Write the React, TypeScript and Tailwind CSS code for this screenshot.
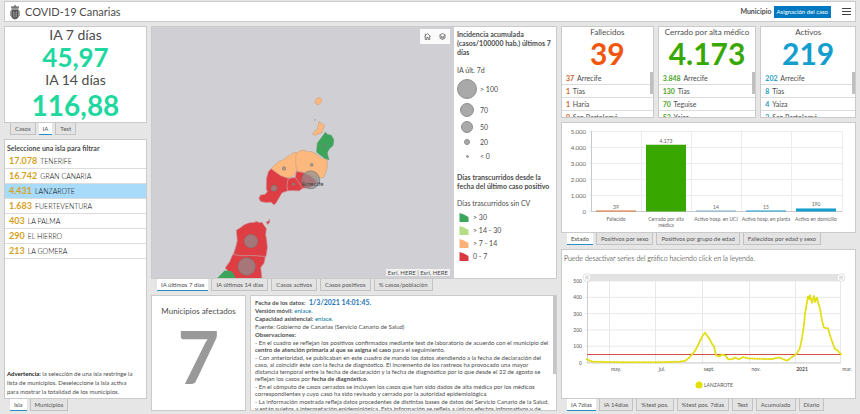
import { useState, type ReactNode } from "react"
import clsx from "clsx"

const islands = [
  { name: "TENERIFE", cases: "17.078" },
  { name: "GRAN CANARIA", cases: "16.742" },
  { name: "LANZAROTE", cases: "4.431" },
  { name: "FUERTEVENTURA", cases: "1.683" },
  { name: "LA PALMA", cases: "403" },
  { name: "EL HIERRO", cases: "290" },
  { name: "LA GOMERA", cases: "213" },
]

const indicators = [
  {
    title: "Fallecidos",
    total: "39",
    color: "text-[#f0560f]",
    rowColor: "text-[#d0632a]",
    rows: [["37", "Arrecife"], ["1", "Tías"], ["1", "Haría"], ["0", "San Bartolomé"]],
  },
  {
    title: "Cerrado por alta médico",
    total: "4.173",
    color: "text-[#38a800]",
    rowColor: "text-[#4fa52a]",
    rows: [["3.848", "Arrecife"], ["130", "Tías"], ["70", "Teguise"], ["53", "Yaiza"]],
  },
  {
    title: "Activos",
    total: "219",
    color: "text-[#149ece]",
    rowColor: "text-[#2b9cc4]",
    rows: [["202", "Arrecife"], ["8", "Tías"], ["4", "Yaiza"], ["2", "San Bartolomé"]],
  },
]

const bars = [
  { label: ["Fallecido"], value: 39, text: "39", fill: "#e0702f" },
  { label: ["Cerrado por alta", "médica"], value: 4173, text: "4.173", fill: "#38a800" },
  { label: ["Activo hosp. en UCI"], value: 14, text: "14", fill: "#7fb2c8" },
  { label: ["Activo hosp. en planta"], value: 15, text: "15", fill: "#149ece" },
  { label: ["Activo en domicilio"], value: 190, text: "190", fill: "#149ece" },
]

// [x on the time axis, accumulated incidence]
const series = [
  [25, 20], [28, 10], [31, 5], [48, 3], [70, 1], [93, 1], [110, 4], [118, 5], [123, 10], [127, 28],
  [130, 49], [133, 72], [136, 105], [139, 145], [141, 168], [143, 182], [145, 165], [147, 150],
  [150, 115], [152, 100], [154, 46], [157, 35], [160, 50], [164, 40], [166, 20], [170, 20],
  [173, 30], [177, 20], [181, 33], [186, 25], [196, 23], [210, 21], [217, 31], [225, 11],
  [230, 33], [235, 55], [238, 90], [240, 150], [242, 230], [243, 300], [245, 373], [246, 405],
  [247, 385], [248, 414], [250, 366], [252, 410], [253, 370], [255, 400], [256, 370], [258, 332],
  [260, 260], [262, 213], [266, 209], [269, 148], [273, 82], [276, 72], [279, 50],
]

const months = [
  { x: 48, label: "may." },
  { x: 94, label: "jul." },
  { x: 141, label: "sept." },
  { x: 188, label: "nov." },
  { x: 234, label: "2021" },
  { x: 279, label: "mar." },
]

function Panel({ className, children }: { className?: string; children: ReactNode }) {
  return <section className={clsx("min-h-0 min-w-0 border border-[#cacaca] bg-white", className)}>{children}</section>
}

function Tabs({ items, initial = 0 }: { items: string[]; initial?: number }) {
  const [active, setActive] = useState(initial)

  return (
    <div role="tablist" className="flex h-3 shrink-0 gap-[3px] pl-[6px]">
      {items.map((item, i) => (
        <button
          key={item}
          role="tab"
          aria-selected={i === active}
          onClick={() => setActive(i)}
          className={clsx(
            "border-b px-1 text-[6px] leading-[11px] whitespace-nowrap",
            i === active
              ? "border-[#2a8dc2] bg-white"
              : "border-r border-l border-[#c2c2c2] bg-[#e3e3e3] text-[#555]"
          )}
        >
          {item}
        </button>
      ))}
    </div>
  )
}

function Crest() {
  return (
    <svg viewBox="0 0 10 16" className="h-4 w-[10px]" aria-hidden="true">
      <path d="M1 4 1.6 1.8 3 2.8 5 .8l2 2 1.4-1L9 4z" fill="#777" />
      <path d="M1.5 5h7" stroke="#333" strokeWidth="1" />
      <path d="M1.3 6h7.4v6.5Q8 15 5 15.4 2 15 1.3 12.500z" fill="#555" />
      <path d="M3.500 7v6M5 8v6M6.500 7v6" stroke="#aaa" strokeWidth=".6" />
      <path d="M.5 7v5M9.500 7v5" stroke="#888" strokeWidth=".8" />
    </svg>
  )
}

function Header() {
  return (
    <header className="flex h-[21px] shrink-0 items-center border border-[#cacaca] bg-white pr-1 pl-[5px]">
      <Crest />
      <h1 className="ml-[5px] text-[11px] leading-4">COVID-19 Canarias</h1>
      <span id="municipio" className="mr-[2px] ml-auto text-[7px] font-bold">
        Municipio
      </span>
      <button aria-describedby="municipio" className="h-3 bg-[#0079c1] px-[3px] text-[6px] leading-3 text-white">
        Asignación del caso
      </button>
      <button aria-label="Menú" className="ml-[11px]">
        <svg viewBox="0 0 9 9" className="size-[9px]" stroke="#444" strokeWidth="1">
          <path d="M0 1.500h9M0 4.500h9M0 7.500h9" />
        </svg>
      </button>
    </header>
  )
}

function MapView() {
  return (
    <div className="relative min-w-0 flex-1 bg-[#cfcfd4]">
      <svg
        viewBox="-144 -189 906 756"
        preserveAspectRatio="xMidYMid slice"
        className="absolute inset-0 h-full w-full"
        role="img"
        aria-label="Mapa de municipios"
      >
        <g fill="#fdb97d" stroke="#c9a184" strokeWidth="2">
          <path d="m345 37 5-10 10-3 6 6-2 8-7 7-9-1z" />
          <path d="m357 96 17 12-9 22-14 4-5 4-8-4 6-9 8-6z" />
          <path d="m213 238 12-12 12-11 16-5 8-9 9-3 6-6 12-4 4 12-2 46-14 17-22 3-20-7z" />
          <path d="m288 192 12-8 13-2 9 5 12-1 14 7 16 13 17 4 1 24-4 12-7 18-14 2-27-8-22-10-18-3-3-23z" />
        </g>
        <path d="m343 89 4-1-1 6-3 1z" fill="#aaa" />
        <path d="m438 102 5 1-2 2z" fill="#bbb" />
        <path
          d="m371 136 5-8 5 6 13 4 7 13-2 17-11 10-6 10 1 10 4 13-13-5-18-13-6-5 2-27z"
          fill="#3ba55b"
          stroke="#5c9a68"
          strokeWidth="2"
        />
        <g fill="#de3d43" stroke="#c98b90" strokeWidth="2">
          <path d="m213 238 28 20 24 9-4 21 2 16-17 6-12 20-6 11-7 5-7-8-17 1-15-3-5-9 4-10 15-3 6-7-3-10 1-32 6-20z" />
          <path d="m265 267 21-3 9 12 13 20-10 8-20-1-15 1-2-17z" />
          <path d="m289 246 19 3 22 10 20 15-7 12-14 8-21 2-13-20-9-12z" />
          <path d="m199 397 6-2 4-6-1 11-5 5z" />
          <path d="m109 422 12-7 12-9 15-6 14-1 8-3 8 4 8-2 7 11 6 8-2 18 3 18 2 21-4 27-45-3-28 1-25-4 7-21 5-20z" />
          <path d="m98 495 25 4 28-1 45 3-4 20-10 13 4 34h-84l-26-33 13-18z" />
        </g>
        <path d="m50 568 15-16 9-9 21 2 10 15v8z" fill="#3ba55b" />
        <g fill="#8f8f8f" fillOpacity=".7" stroke="#777" strokeWidth="2">
          <circle cx="153" cy="455" r="20" />
          <circle cx="140" cy="531" r="26" />
          <circle cx="222" cy="296" r="9" />
          <circle cx="252" cy="237" r="5" />
          <circle cx="335" cy="226" r="4" />
          <circle cx="281" cy="284" r="4" />
          <circle cx="374" cy="168" r="3" />
          <circle cx="332" cy="271" r="27" />
        </g>
        <text x="338" y="289" textAnchor="middle" fontSize="19" fill="#444">
          Arrecife
        </text>
      </svg>
      <div className="absolute top-[2px] right-1 flex h-[15px] items-center bg-white/90">
        <button aria-label="Inicio" className="px-[4px]">
          <svg viewBox="0 0 14 14" className="size-[7px]" fill="none" stroke="#555" strokeWidth="1.500">
            <path d="M1 7 7 1l6 6M2.500 6v7h3V9h3v4h3V6M2.500 5V1.500" />
          </svg>
        </button>
        <button aria-label="Capas" className="px-[4px]">
          <svg viewBox="0 0 14 14" className="size-[7px]" fill="none" stroke="#555" strokeWidth="1.500">
            <path d="M7 1 13 4.500 7 8 1 4.500zM1 7l6 3.500L13 7M1 9.500 7 13l6-3.500" />
          </svg>
        </button>
      </div>
      <p className="absolute right-1 bottom-[2px] bg-white/70 px-[2px] text-[6px] leading-[7px]">
        Esri, HERE | Esri, HERE
      </p>
    </div>
  )
}

const sizes = [
  { dot: "size-5", label: "> 100" },
  { dot: "size-[14px]", label: "70" },
  { dot: "size-3", label: "50" },
  { dot: "size-[6px]", label: "20" },
  { dot: "size-[3px]", label: "< 0" },
]

const ranges = [
  { color: "#3ba55b", label: "> 30" },
  { color: "#b5dd84", label: "> 14 - 30" },
  { color: "#fdb179", label: "> 7 - 14" },
  { color: "#d7393f", label: "0 - 7" },
]

function Legend() {
  return (
    <aside className="w-[102px] shrink-0 overflow-hidden py-[3px] pr-1 pl-[3px] text-[7px] leading-[9px]">
      <h2 className="font-bold">Incidencia acumulada (casos/100000 hab.) últimos 7 días</h2>
      <p className="mt-[9px] mb-1">IA últ. 7d</p>
      <ul className="flex flex-col gap-1">
        {sizes.map((s) => (
          <li key={s.label} className="flex min-h-[10px] items-center gap-[3px]">
            <span className="flex w-5 justify-center">
              <span className={clsx("rounded-full border border-[#8f8f8f] bg-[#a9a9a9]", s.dot)} />
            </span>
            {s.label}
          </li>
        ))}
      </ul>
      <h2 className="mt-3 font-bold">Días transcurridos desde la fecha del último caso positivo</h2>
      <p className="mt-2 mb-[5px]">Días trascurridos sin CV</p>
      <ul className="flex flex-col gap-1">
        {ranges.map((r) => (
          <li key={r.label} className="flex items-center gap-1 pl-[2px]">
            <svg viewBox="0 0 10 9" className="h-[9px] w-[10px]">
              <path d="M.5 0 5 1.500 9.500 4v5h-9z" fill={r.color} />
            </svg>
            {r.label}
          </li>
        ))}
      </ul>
    </aside>
  )
}

function Notes() {
  return (
    <Panel className="relative flex-1 overflow-hidden pt-[2px] pr-1 pl-1 text-[6px]">
      <div className="leading-[8px]">
        <p>
          <b>Fecha de los datos:</b> <b className="ml-[2px] text-[7px] text-[#2475b5]">1/3/2021 14:01:45.</b>
        </p>
        <p>
          <b>Versión móvil:</b> <a href="#movil" className="text-[#0079a1]">enlace.</a>
        </p>
        <p>
          <b>Capacidad asistencial:</b> <a href="#capacidad" className="text-[#0079a1]">enlace.</a>
        </p>
        <p>Fuente: Gobierno de Canarias (Servicio Canario de Salud)</p>
        <p className="font-bold">Observaciones:</p>
      </div>
      <div className="flex flex-col gap-px leading-[7px]">
        <p>
          - En el cuadro se reflejan los positivos confirmados mediante test de laboratorio de acuerdo con el municipio del{" "}
          <b>centro de atención primaria al que se asigna el caso</b> para el seguimiento.
        </p>
        <p>
          - Con anterioridad, se publicaban en este cuadro de mando los datos atendiendo a la fecha de declaración del caso,
          al coincidir éste con la fecha de diagnóstico. El incremento de los rastreos ha provocado una mayor distancia
          temporal entre la fecha de declaración y la fecha de diagnóstico por lo que desde el 22 de agosto se reflejan los
          casos por <b>fecha de diagnóstico</b>.
        </p>
        <p>
          - En el cómputo de casos cerrados se incluyen los casos que han sido dados de alta médica por los médicos
          correspondientes y cuyo caso ha sido revisado y cerrado por la autoridad epidemiológica.
        </p>
        <p>
          - La información mostrada refleja datos procedentes de distintas bases de datos del Servicio Canario de la Salud,
          y están sujetos a interpretación epidemiológica. Esta información se refleja a únicos efectos informativos y de
          transparencia. Los
        </p>
      </div>
      <span className="absolute top-0 right-0 h-[78px] w-[3px] bg-[#c6c6c6]" />
    </Panel>
  )
}

function BarChart() {
  return (
    <svg viewBox="0 0 293 109" className="h-full w-full" fontSize="6" fill="#666" role="img" aria-label="Casos por estado">
      {["0", "1.000", "2.000", "3.000", "4.000", "5.000"].map((tick, i) => (
        <g key={tick}>
          <path d={`M27 ${88.5 - i * 16}h253`} stroke="#ececec" />
          <text x="24" y={90.5 - i * 16} textAnchor="end">
            {tick}
          </text>
        </g>
      ))}
      {[79, 129, 179, 229, 280].map((x) => (
        <path key={x} d={`M${x + 0.5} 8v81`} stroke="#ececec" />
      ))}
      <path d="M29.500 8v81M29 88.500h251" stroke="#c9c9c9" fill="none" />
      {bars.map((bar, i) => {
        const height = Math.max(1, (bar.value / 5000) * 80)
        const center = 54 + i * 50
        return (
          <g key={bar.text} textAnchor="middle">
            <rect x={center - 20} y={88.5 - height} width="40" height={height} fill={bar.fill} />
            <text x={center} y={86.5 - height} fontSize="5">
              {bar.text}
            </text>
            {bar.label.map((line, n) => (
              <text key={line} x={center} y={98 + n * 6} fontSize="5">
                {line}
              </text>
            ))}
          </g>
        )
      })}
    </svg>
  )
}

function LineChart() {
  const points = series.map(([x, v]) => `${x},${97.5 - v * 0.163}`).join(" ")

  return (
    <svg viewBox="0 0 293 132" className="min-h-0 w-full flex-1" fontSize="5" fill="#555" role="img" aria-label="IA 7 días">
      {[0, 100, 200, 300, 400, 500].map((tick, i) => (
        <g key={tick}>
          <path d={`M23 ${97.5 - i * 16.3}h256`} stroke="#e8e8e8" />
          <text x="20" y={99.500 - i * 16.3} textAnchor="end">
            {tick}
          </text>
        </g>
      ))}
      {months.map((m) => (
        <g key={m.label}>
          <path d={`M${m.x - 0.5} 16v83`} stroke="#e8e8e8" />
          <text x={m.x + 6} y="106" textAnchor="middle" fontWeight={m.label === "2021" ? 700 : 400}>
            {m.label}
          </text>
        </g>
      ))}
      <path d="M25.500 16v82h253" stroke="#cfcfcf" fill="none" />
      <rect x="25" y="9" width="254" height="7" fill="#e2e2e2" />
      {[25, 279].map((x) => (
        <g key={x}>
          <circle cx={x} cy="12.500" r="4" fill="#fff" stroke="#ccc" strokeWidth=".6" />
          <path d={`M${x - 1} 10.500v4M${x + 1} 10.500v4`} stroke="#999" strokeWidth=".6" />
        </g>
      ))}
      <path d="M25 89.500h254" stroke="#d0504c" strokeWidth="1" />
      <polyline points={points} fill="none" stroke="#e8e337" strokeWidth="1.200" strokeLinejoin="round" />
      <polyline
        points={points}
        fill="none"
        stroke="#e2dd10"
        strokeWidth="2"
        strokeLinecap="round"
        strokeDasharray="0.100 2.200"
      />
      <circle cx="137" cy="120" r="3.500" fill="#e3e000" />
      <text x="142" y="122">
        LANZAROTE
      </text>
    </svg>
  )
}

export default function App() {
  const [selected, setSelected] = useState("LANZAROTE")

  return (
    <div className="flex h-screen flex-col gap-1 bg-[#e6e6e6] px-1 pt-px pb-[3px] font-['Lato',sans-serif] text-[#4c4c4c]">
      <Header />

      <main className="grid min-h-0 flex-1 grid-cols-[143fr_406fr_295fr] gap-1">
        <div className="flex min-h-0 min-w-0 flex-col">
          <Panel className="flex h-[97px] shrink-0 flex-col items-center overflow-hidden">
            <h2 className="text-[14px] leading-4">IA 7 días</h2>
            <p className="text-[26px] leading-7 font-bold text-[#1fd8a0]">45,97</p>
            <h2 className="text-[14px] leading-[18px]">IA 14 días</h2>
            <p className="text-[28px] leading-8 font-bold text-[#1fd8a0]">116,88</p>
          </Panel>
          <Tabs items={["Casos", "IA", "Test"]} initial={1} />

          <Panel className="mt-1 flex flex-1 flex-col">
            <h2 className="px-[2px] pt-[2px] text-[7px] leading-3 font-bold">Seleccione una isla para filtrar</h2>
            <ul>
              {islands.map((island) => (
                <li key={island.name} className="border-b border-[#dcdcdc]">
                  <button
                    onClick={() => setSelected(island.name)}
                    className={clsx(
                      "flex h-[14px] w-full items-center gap-[3px] px-1",
                      selected === island.name && "bg-[#a8dbf9]"
                    )}
                  >
                    <span className="text-[9px] font-bold text-[#d6a21e]">{island.cases}</span>
                    <span className="text-[7px] font-light text-black">{island.name}</span>
                  </button>
                </li>
              ))}
            </ul>
            <p className="mt-auto px-[2px] pb-[2px] text-[6px] leading-[9px]">
              <b className="text-[#222]">Advertencia:</b> la selección de una isla restringe la
              <br />
              lista de municipios. Deseleccione la isla activa
              <br />
              para mostrar la totalidad de los municipios.
            </p>
          </Panel>
          <Tabs items={["Isla", "Municipios"]} />
        </div>

        <div className="flex min-h-0 min-w-0 flex-col">
          <Panel className="flex flex-1">
            <MapView />
            <Legend />
          </Panel>
          <Tabs items={["IA últimos 7 días", "IA últimos 14 días", "Casos activos", "Casos positivos", "% casos/población"]} />

          <div className="mt-1 flex h-[116px] shrink-0 gap-1">
            <Panel className="flex w-[95px] shrink-0 flex-col items-center pt-[9px]">
              <h2 className="text-[8px] leading-3">Municipios afectados</h2>
              <p className="mt-[3px] text-[72px] leading-[72px] font-bold text-[#999]">7</p>
            </Panel>
            <Notes />
          </div>
        </div>

        <div className="flex min-h-0 min-w-0 flex-col">
          <div className="grid h-[92px] shrink-0 grid-cols-[93fr_99fr_96fr] gap-1">
            {indicators.map((item) => (
              <Panel key={item.title} className="relative overflow-hidden">
                <h2 className="text-center text-[8px] leading-[10px] whitespace-nowrap">{item.title}</h2>
                <p className={clsx("mb-[3px] text-center text-[30px] leading-8 font-bold", item.color)}>{item.total}</p>
                <ul>
                  {item.rows.map(([count, place]) => (
                    <li key={place} className="h-[13px] border-b border-[#dcdcdc] pl-1 text-[7px] leading-3 whitespace-nowrap">
                      <b className={item.rowColor}>{count}</b> <span className="ml-px">{place}</span>
                    </li>
                  ))}
                </ul>
                <span className="absolute top-[45px] right-0 h-[22px] w-[3px] bg-[#c0c0c0]" />
              </Panel>
            ))}
          </div>

          <Panel className="mt-1 h-[111px] shrink-0">
            <BarChart />
          </Panel>
          <Tabs items={["Estado", "Positivos por sexo", "Positivos por grupo de edad", "Fallecidos por edad y sexo"]} />

          <Panel className="mt-1 flex flex-1 flex-col">
            <p className="px-[2px] pt-[2px] text-[7px] leading-3 font-light text-black">
              Puede desactivar series del gráfico haciendo click en la leyenda.
            </p>
            <LineChart />
          </Panel>
          <Tabs items={["IA 7días", "IA 14días", "%test pos.", "%test pos. 7días", "Test", "Acumulado", "Diario"]} />
        </div>
      </main>
    </div>
  )
}
